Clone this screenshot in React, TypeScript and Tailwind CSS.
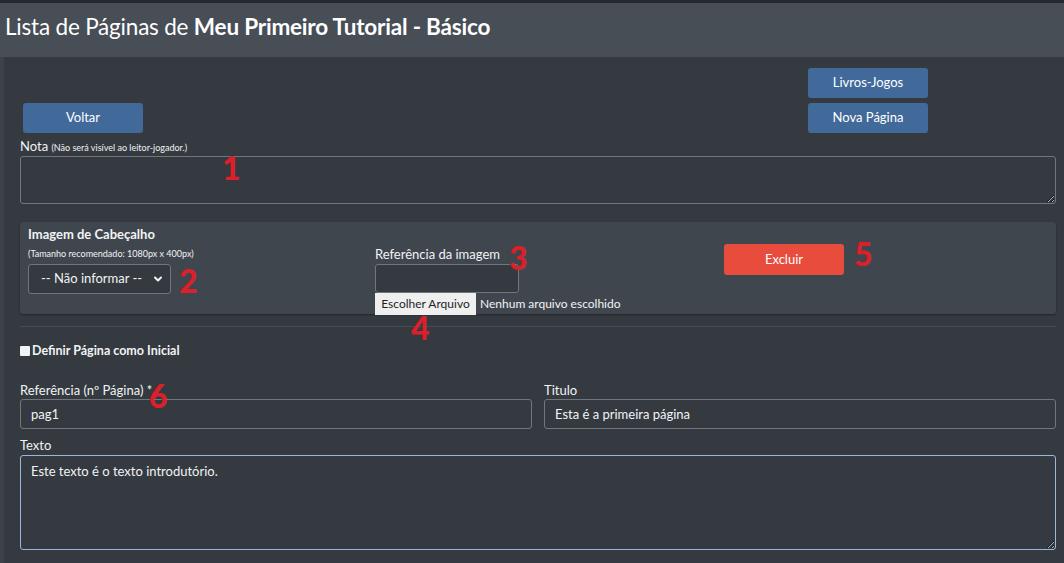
import React from 'react';

const Marker = ({ n, className }: { n: string; className: string }) => (
    <span className={`absolute font-['Lato',sans-serif] font-black text-[32px] leading-none text-[#dc2029] ${className}`}>{n}</span>
);

const BlueButton = ({ children }: { children: React.ReactNode }) => (
    <button className="w-[120px] h-[30px] rounded-[3px] bg-[#41699a] text-[13px] text-white">{children}</button>
);

export default function App() {
    return (
        <div className="relative min-h-screen bg-[#343a40] font-['Lato',sans-serif] text-[#f1f3f5] overflow-hidden">
            <div className="h-[3px] bg-[#26292d]" />
            <header className="h-[54px] bg-[#474e56] flex items-center pl-[5px] pb-[6px]">
                <h1 className="text-[22.5px] text-white tracking-[-0.2px]">
                    Lista de Páginas de <span className="font-bold">Meu Primeiro Tutorial - Básico</span>
                </h1>
            </header>

            <div className="flex">
                <div className="w-[4px] bg-[#3d434a]" />
                <main className="flex-1 pl-[16px] pr-[8px] pb-[14px]">
                    <div className="flex items-end pt-[11px]">
                        <div className="w-[788px] pl-[3px]">
                            <BlueButton>Voltar</BlueButton>
                        </div>
                        <div className="flex flex-col gap-[5px]">
                            <BlueButton>Livros-Jogos</BlueButton>
                            <BlueButton>Nova Página</BlueButton>
                        </div>
                    </div>

                    <label className="block mt-[4px] mb-[-1px] text-[13px] leading-[18px]">
                        Nota <span className="text-[9px]">(Não será visível ao leitor-jogador.)</span>
                    </label>
                    <textarea className="block w-full h-[48px] rounded-[3px] border border-[#6f767d] bg-[#343a40]" />

                    <section className="mt-[18px] h-[92px] rounded-[3px] bg-[#40464e] shadow-[0_1px_2px_rgba(0,0,0,0.35)] grid grid-cols-[347px_349px_1fr] pl-[8px] pt-[3px]">
                        <div>
                            <div className="text-[13px] font-bold leading-[18px]">Imagem de Cabeçalho</div>
                            <div className="text-[9px] leading-[12px] mt-[5px]">(Tamanho recomendado: 1080px x 400px)</div>
                            <div className="mt-[4px] w-[143px] h-[30px] rounded-[3px] border border-[#6f767d] bg-[#343a40] flex items-center justify-between pl-[12px] pr-[7px] text-[13px]">
                                <span>-- Não informar --</span>
                                <svg width="10" height="10" viewBox="0 0 10 10" fill="none" stroke="#f1f3f5" strokeWidth="2" strokeLinecap="round" strokeLinejoin="round">
                                    <path d="M2 3.5 5 6.5 8 3.5" />
                                </svg>
                            </div>
                        </div>
                        <div className="pt-[20px]">
                            <div className="text-[13px] leading-[18px]">Referência da imagem</div>
                            <div className="mt-[1px] w-[144px] h-[29px] rounded-[3px] border border-[#6f767d] bg-[#343a40]" />
                            <div className="flex items-center">
                                <span className="h-[22px] w-[101px] flex items-center justify-center bg-[#efefef] text-[#1f1f1f] text-[12px]">Escolher Arquivo</span>
                                <span className="ml-[4px] text-[12px]">Nenhum arquivo escolhido</span>
                            </div>
                        </div>
                        <div className="pt-[19px]">
                            <button className="w-[120px] h-[31px] rounded-[3px] bg-[#e74c3c] text-[13px] text-white">Excluir</button>
                        </div>
                    </section>

                    <hr className="mt-[12px] border-0 border-t border-[#454c53]" />

                    <label className="mt-[15px] flex items-center gap-[2px] text-[12.5px] font-bold">
                        <span className="w-[10px] h-[10px] bg-[#f1f3f5] rounded-[1px] mb-[1px]" />
                        <span>Definir Página como Inicial</span>
                    </label>

                    <div className="mt-[20px] grid grid-cols-2 gap-x-[12px]">
                        <div>
                            <div className="text-[13px] leading-[18px]">Referência (nº Página) *</div>
                            <div className="h-[30px] rounded-[3px] border border-[#6f767d] flex items-center pl-[10px] pt-[2px] text-[13px]">pag1</div>
                        </div>
                        <div>
                            <div className="text-[13px] leading-[18px]">Titulo</div>
                            <div className="h-[30px] rounded-[3px] border border-[#6f767d] flex items-center pl-[10px] pt-[2px] text-[13px]">Esta é a primeira página</div>
                        </div>
                    </div>

                    <div className="mt-[7px] text-[13px] leading-[18px]">Texto</div>
                    <textarea
                        defaultValue="Este texto é o texto introdutório."
                        className="block w-full h-[95px] mt-[1px] rounded-[3px] border border-[#9bb6d8] bg-[#343a40] pl-[10px] pt-[6px] text-[13px] text-[#f1f3f5] outline-none"
                    />
                </main>
            </div>

            <Marker n="1" className="left-[222px] top-[152px]" />
            <Marker n="2" className="left-[179px] top-[265px]" />
            <Marker n="3" className="left-[509px] top-[242px]" />
            <Marker n="4" className="left-[411px] top-[312px]" />
            <Marker n="5" className="left-[854px] top-[238px]" />
            <Marker n="6" className="left-[149px] top-[380px]" />
        </div>
    );
}
